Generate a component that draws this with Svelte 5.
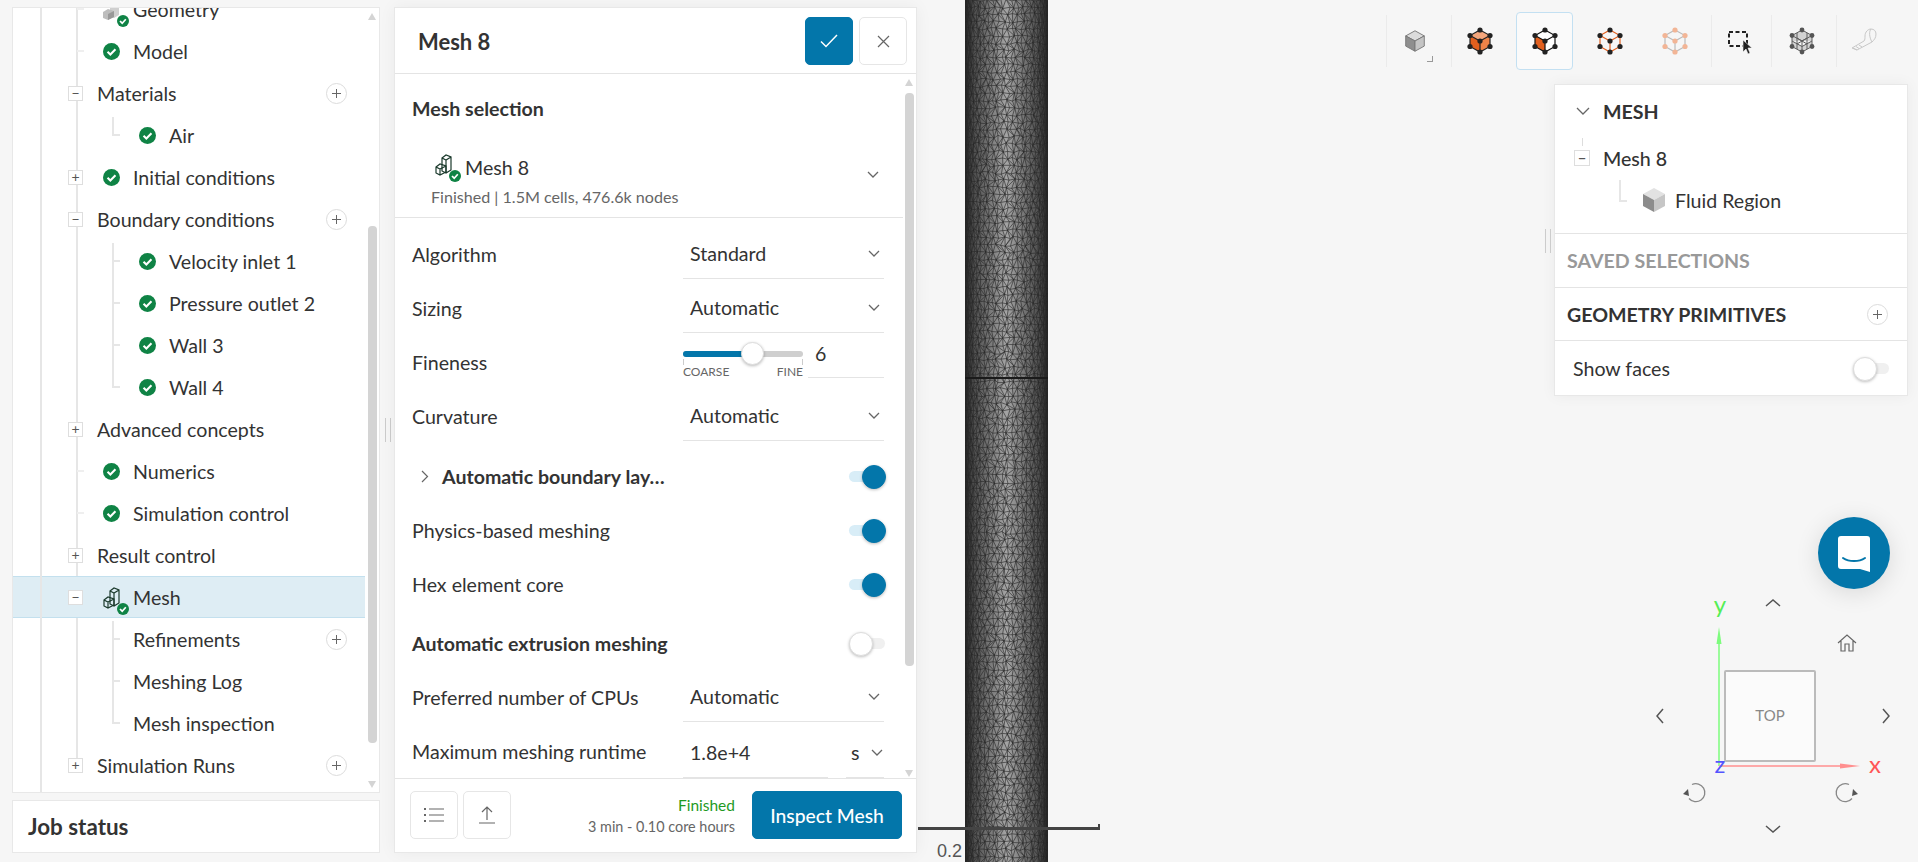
<script lang="ts">
  const treeRows = [
    { label: 'Geometry', level: 0, icon: 'geo' },
    { label: 'Model', level: 0, icon: 'check' },
    { label: 'Materials', level: 0, toggle: '-', add: true },
    { label: 'Air', level: 1, icon: 'check', first: true, last: true },
    { label: 'Initial conditions', level: 0, toggle: '+', icon: 'check' },
    { label: 'Boundary conditions', level: 0, toggle: '-', add: true },
    { label: 'Velocity inlet 1', level: 1, icon: 'check', first: true },
    { label: 'Pressure outlet 2', level: 1, icon: 'check' },
    { label: 'Wall 3', level: 1, icon: 'check' },
    { label: 'Wall 4', level: 1, icon: 'check', last: true },
    { label: 'Advanced concepts', level: 0, toggle: '+' },
    { label: 'Numerics', level: 0, icon: 'check' },
    { label: 'Simulation control', level: 0, icon: 'check' },
    { label: 'Result control', level: 0, toggle: '+' },
    { label: 'Mesh', level: 0, toggle: '-', icon: 'mesh', selected: true },
    { label: 'Refinements', level: 1, add: true, first: true },
    { label: 'Meshing Log', level: 1 },
    { label: 'Mesh inspection', level: 1, last: true },
    { label: 'Simulation Runs', level: 0, toggle: '+', add: true },
  ];

  // triangulated surface of the cylinder, squeezed towards the edges
  function buildMesh() {
    let seed = 4711;
    const rand = () => {
      seed = (seed * 16807) % 2147483647;
      return seed / 2147483647 - 0.5;
    };
    const cols = 26;
    const rows = 120;
    const R = 41;
    const pts: [number, number][][] = [];
    for (let j = 0; j <= rows; j++) {
      const line: [number, number][] = [];
      for (let i = 0; i <= cols; i++) {
        const t = (i / cols - 0.5) * Math.PI + (i % cols ? rand() * 0.07 : 0) + (j % 2 ? 0.06 : 0);
        const x = 41.5 + R * Math.sin(Math.max(-1.57, Math.min(1.57, t)));
        line.push([+x.toFixed(1), +(j * 7.2 + rand() * 3).toFixed(1)]);
      }
      pts.push(line);
    }
    let d = '';
    for (let j = 0; j < rows; j++) {
      for (let i = 0; i < cols; i++) {
        const a = pts[j][i];
        const b = pts[j][i + 1];
        const c = pts[j + 1][i];
        const e = pts[j + 1][i + 1];
        d += `M${a}L${b}M${a}L${c}`;
        d += (i + j) % 2 ? `M${a}L${e}` : `M${b}L${c}`;
      }
    }
    return d.replace(/,/g, ' ');
  }
  const meshPath = buildMesh();

  const hexDots = [[0, -11], [10, -5.5], [10, 5.5], [0, 11], [-10, 5.5], [-10, -5.5], [0, 0]];
</script>

{#snippet okIcon(size = 17)}
  <svg width={size} height={size} viewBox="0 0 18 18">
    <circle cx="9" cy="9" r="9" fill="#0f8345" />
    <path d="M4.8 9.2l3 3 5.4-5.6" fill="none" stroke="#fff" stroke-width="2.2" />
  </svg>
{/snippet}

{#snippet badge()}
  <circle cx="20" cy="30" r="6" fill="#0f8345" />
  <path d="M17 30l2.2 2.2 3.600-4" fill="none" stroke="#fff" stroke-width="1.700" />
{/snippet}

{#snippet meshIcon()}
  <svg class="mesh-icon" width="27" height="36" viewBox="0 0 27 36">
    <g fill="none" stroke="#1b3a2c" stroke-width="1.200">
      <path d="M7 12l4-3 5 2v13l-5 3-4-2zM7 12l4 2 5-3M11 14v13" />
      <path d="M1 21l4-3 6 2v6l-6 3-4-2zM1 21l4 2 6-3M5 23v6" />
    </g>
    {@render badge()}
  </svg>
{/snippet}

{#snippet geoIcon()}
  <svg class="mesh-icon" width="27" height="36" viewBox="0 0 27 36">
    <path d="M7 12l4-3 5 2v13l-5 3-4-2z" fill="#cfcfcf" />
    <path d="M0 21l5-3 6 2v6l-6 3-5-2z" fill="#bdbdbd" />
    <path d="M5 23l6-3v6l-6 3z" fill="#999" />
    {@render badge()}
  </svg>
{/snippet}

{#snippet addBtn()}
  <span class="add">
    <svg width="9" height="9" viewBox="0 0 9 9"><path d="M4.5 0v9M0 4.5h9" stroke="#666" stroke-width="1" /></svg>
  </span>
{/snippet}

{#snippet chevron()}
  <svg class="chev" width="12" height="8" viewBox="0 0 12 8"><path d="M1 1l5 5 5-5" fill="none" stroke="#666" stroke-width="1.3" /></svg>
{/snippet}

{#snippet toggle(on = true)}
  <span class="toggle" class:on><span class="knob"></span></span>
{/snippet}

{#snippet selectField(value, cls = '')}
  <div class="field {cls}"><span>{value}</span>{@render chevron()}</div>
{/snippet}

{#snippet cubeTool(top, left, right, edge, dot, dotR = 2.6)}
  <svg width="28" height="28" viewBox="-14 -14 28 28">
    <path d="M0-11L10-5.500 0 0-10-5.500z" fill={top} />
    <path d="M-10-5.500L0 0V11L-10 5.500z" fill={left} />
    <path d="M10-5.500L0 0V11L10 5.500z" fill={right} />
    <path d="M0-11L10-5.500V5.500L0 11-10 5.500V-5.500zM0 0V11M0 0L10-5.500M0 0L-10-5.500" fill="none" stroke={edge} stroke-width="1.2" />
    {#each hexDots as [cx, cy]}
      <circle {cx} {cy} r={dotR} fill={dot} />
    {/each}
  </svg>
{/snippet}

<div class="app">
  <!-- 3D viewport behind the panels -->
  <div class="viewport">
    <svg class="cylinder" width="83" height="862" viewBox="0 0 83 862">
      <defs>
        <linearGradient id="shade" x1="0" x2="1" y1="0" y2="0">
          <stop offset="0" stop-color="#2b2b2b" />
          <stop offset="0.12" stop-color="#505050" />
          <stop offset="0.5" stop-color="#a4a4a4" />
          <stop offset="0.88" stop-color="#505050" />
          <stop offset="1" stop-color="#2b2b2b" />
        </linearGradient>
      </defs>
      <rect width="83" height="862" fill="url(#shade)" />
      <path d={meshPath} fill="none" stroke="#262626" stroke-width="0.8" stroke-opacity="0.78" />
      <rect y="377" width="83" height="2" fill="#1a1a1a" />
    </svg>
    <div class="scale-line"></div>
    <div class="scale-tick"></div>
    <span class="scale-label">0.2</span>

    <div class="toolbar">
      <div class="tool sep view">
        <svg width="26" height="26" viewBox="-14 -14 28 28">
          <path d="M0-11L10-5.500 0 0-10-5.500z" fill="#dcdcdc" stroke="#777" />
          <path d="M-10-5.500L0 0V11L-10 5.500z" fill="#8e8e8e" stroke="#777" />
          <path d="M10-5.500L0 0V11L10 5.500z" fill="#c4c4c4" stroke="#777" />
        </svg>
        <span class="corner"></span>
      </div>
      <div class="tool sep">{@render cubeTool('#f4a67c', '#e2601f', '#ef8348', '#222', '#222')}</div>
      <div class="tool active">{@render cubeTool('#fff', '#e2601f', '#fff', '#111', '#222')}</div>
      <div class="tool">{@render cubeTool('none', 'none', 'none', '#e2601f', '#222')}</div>
      <div class="tool gap">{@render cubeTool('none', 'none', 'none', '#bbb', '#f2b596')}</div>
      <div class="tool sep narrow">
        <svg width="28" height="28" viewBox="0 0 28 28">
          <rect x="3" y="5" width="18" height="14" fill="none" stroke="#222" stroke-width="2" stroke-dasharray="4 2.500" />
          <path d="M17 13v12l3-3 2 5 2-1-2-5h4z" fill="#222" stroke="#f6f6f6" stroke-width="0.6" />
        </svg>
      </div>
      <div class="tool sep shift">
        <svg width="28" height="28" viewBox="-14 -14 28 28">
          <path d="M0-11L10-5.500V5.500L0 11-10 5.500V-5.500zM0 0V11M0 0L10-5.500M0 0L-10-5.500M-5-8V8M5-8V8M-10 0L0 5.500 10 0M-5-3L5 3M5-3L-5 3" fill="#bdbdbd" fill-opacity="0.6" stroke="#5c5c5c" stroke-width="1" />
          {#each hexDots.slice(0, 6) as [cx, cy]}
            <circle {cx} {cy} r="2.400" fill="#555" />
          {/each}
        </svg>
      </div>
      <div class="tool sep">
        <svg width="28" height="28" viewBox="0 0 28 28">
          <g fill="none" stroke="#c8c8c8" stroke-width="1">
            <path d="M14 9c0-4 3-7 6-7s5 2 5 5c0 4-2 6-4 8l-15 8-5-2 12-7c1-1 1-3 1-5z" />
            <path d="M20 2c-2 2-2 8 1 13M2 21l4 2M5 19.500l3 2M8 18l3 2" />
          </g>
        </svg>
      </div>
    </div>

    <div class="selection-panel">
      <section class="sel-tree">
        <div class="sel-head">
          <svg width="14" height="8" viewBox="0 0 14 8"><path d="M1 1l6 6 6-6" fill="none" stroke="#666" stroke-width="1.3" /></svg>
          <strong>MESH</strong>
        </div>
        <div class="sel-mesh">
          <span class="box small">−</span>
          <span>Mesh 8</span>
        </div>
        <div class="sel-region">
          <svg width="22" height="24" viewBox="-11 -12 22 24">
            <path d="M0-12L11-6 0 0-11-6z" fill="#e2e2e2" />
            <path d="M-11-6L0 0V12L-11 6z" fill="#8c8c8c" />
            <path d="M11-6L0 0V12L11 6z" fill="#c6c6c6" />
          </svg>
          <span>Fluid Region</span>
        </div>
      </section>
      <section class="sel-row muted-title"><strong>SAVED SELECTIONS</strong></section>
      <section class="sel-row"><strong>GEOMETRY PRIMITIVES</strong>{@render addBtn()}</section>
      <section class="sel-row faces"><span>Show faces</span>{@render toggle(false)}</section>
      <span class="grip panel-grip"></span>
    </div>

    <button class="chat" aria-label="Chat">
      <svg width="34" height="37" viewBox="0 0 34 37">
        <path d="M4 1h26a3 3 0 0 1 3 3v33l-10-3H4a3 3 0 0 1-3-3V4a3 3 0 0 1 3-3z" fill="#fff" />
        <path d="M6 23c6 4 16 4 22 0" fill="none" stroke="#0376aa" stroke-width="2" stroke-linecap="round" />
      </svg>
    </button>

    <!-- orientation gizmo -->
    <svg class="gizmo" width="260" height="260" viewBox="1650 590 260 260">
      <rect x="1725" y="671" width="90" height="90" rx="1" fill="#fbfbfb" stroke="#bbb" stroke-width="2" />
      <text x="1770" y="721" class="gz-top" text-anchor="middle">TOP</text>
      <path d="M1719 766V640" stroke="#7dfc7d" stroke-width="1.500" />
      <path d="M1719 627l-2.500 17h5z" fill="#7dfc7d" />
      <path d="M1719 766h132" stroke="#ff8f8f" stroke-width="1.500" />
      <path d="M1860 766l-20-2.500v5z" fill="#ff8f8f" />
      <text x="1720" y="613" class="gz-y">y</text>
      <text x="1875" y="773" class="gz-x">x</text>
      <text x="1720" y="773" class="gz-z">z</text>
      <g fill="none" stroke="#555" stroke-width="1.500">
        <path d="M1766 606l7-6 7 6M1766 826l7 6 7-6M1663 709l-6 7 6 7M1883 709l6 7-6 7" />
      </g>
      <g fill="none" stroke="#666" stroke-width="1.200">
        <path d="M1838 643l9-8 9 8M1841 641v10h4v-7h4v7h4v-10" />
      </g>
      <g fill="none" stroke="#888" stroke-width="1.300">
        <path d="M1692 784.500a9 9 0 1 1-3 14" />
        <path d="M1849 784.500a9 9 0 1 0 3 14" />
      </g>
      <path d="M1683 794l5-5 1 7zM1858 794l-5-5-1 7z" fill="#555" />
    </svg>
  </div>

  <div class="col-left">
    <div class="tree-panel">
      <div class="tree-rows">
        {#each treeRows as row (row.label)}
          <div
            class="row lvl{row.level}"
            class:selected={row.selected}
            class:first={row.first}
            class:last={row.last}
          >
            <span class="slot">
              {#if row.toggle}<span class="box">{row.toggle === '-' ? '−' : '+'}</span>{/if}
            </span>
            {#if row.icon}
              <span class="row-icon">
                {#if row.icon === 'check'}
                  {@render okIcon()}
                {:else if row.icon === 'mesh'}
                  {@render meshIcon()}
                {:else}
                  {@render geoIcon()}
                {/if}
              </span>
            {/if}
            <span class="row-label">{row.label}</span>
            {#if row.add}{@render addBtn()}{/if}
          </div>
        {/each}
      </div>
      <div class="sb-track tree-sb"><span class="sb-up"></span><span class="sb-thumb"></span><span class="sb-down"></span></div>
    </div>
    <div class="job-status">Job status</div>
  </div>

  <span class="grip left-grip"></span>

  <div class="dialog">
    <header class="dlg-head">
      <h2>Mesh 8</h2>
      <button class="btn primary icon-btn" aria-label="Save">
        <svg width="18" height="14" viewBox="0 0 18 14"><path d="M1 7.500l5 5L17 1" fill="none" stroke="#fff" stroke-width="1.500" /></svg>
      </button>
      <button class="btn icon-btn" aria-label="Close">
        <svg width="13" height="13" viewBox="0 0 13 13"><path d="M1 1l11 11M12 1L1 12" stroke="#666" stroke-width="1.200" /></svg>
      </button>
    </header>

    <div class="dlg-body">
      <div class="dlg-content">
        <h3 class="sec-title">Mesh selection</h3>
        <div class="mesh-pick">
          <div class="pick-text">
            <div class="pick-name">{@render meshIcon()}<span>Mesh 8</span></div>
            <div class="pick-sub">Finished | 1.5M cells, 476.6k nodes</div>
          </div>
          {@render chevron()}
        </div>

        <div class="form">
          <div class="form-row"><label>Algorithm</label>{@render selectField('Standard')}</div>
          <div class="form-row"><label>Sizing</label>{@render selectField('Automatic')}</div>
          <div class="form-row">
            <label>Fineness</label>
            <div class="fine">
              <div class="slider">
                <div class="rail"><span class="fill"></span><span class="thumb"></span></div>
                <div class="ticks"><span>COARSE</span><span>FINE</span></div>
              </div>
              <div class="fine-val">6</div>
            </div>
          </div>
          <div class="form-row"><label>Curvature</label>{@render selectField('Automatic')}</div>
          <div class="form-row toggle-row boundary">
            <div class="bold-label">
              <svg width="8" height="13" viewBox="0 0 8 13"><path d="M1 1l5.500 5.500L1 12" fill="none" stroke="#666" stroke-width="1.200" /></svg>
              <strong>Automatic boundary lay…</strong>
            </div>
            {@render toggle()}
          </div>
          <div class="form-row toggle-row"><label>Physics-based meshing</label>{@render toggle()}</div>
          <div class="form-row toggle-row"><label>Hex element core</label>{@render toggle()}</div>
          <div class="form-row toggle-row extrusion"><strong>Automatic extrusion meshing</strong>{@render toggle(false)}</div>
          <div class="form-row"><label>Preferred number of CPUs</label>{@render selectField('Automatic')}</div>
          <div class="form-row">
            <label>Maximum meshing runtime</label>
            <div class="runtime">
              <div class="field"><span>1.8e+4</span></div>
              <div class="field unit"><span>s</span>{@render chevron()}</div>
            </div>
          </div>
        </div>
      </div>
      <div class="sb-track dlg-sb"><span class="sb-up"></span><span class="sb-thumb"></span><span class="sb-down"></span></div>
    </div>

    <footer class="dlg-foot">
      <button class="btn icon-btn" aria-label="Log">
        <svg width="20" height="16" viewBox="0 0 20 16"><path d="M5 2h15M5 8h15M5 14h15" stroke="#666" stroke-width="1.200" /><path d="M0 1h2v2H0zM0 7h2v2H0zM0 13h2v2H0z" fill="#666" /></svg>
      </button>
      <button class="btn icon-btn" aria-label="Export">
        <svg width="16" height="18" viewBox="0 0 16 18"><path d="M8 14V1M3 6l5-5 5 5M0 17h16" fill="none" stroke="#666" stroke-width="1.200" /></svg>
      </button>
      <div class="status">
        <span class="finished">Finished</span>
        <span class="hours">3 min - 0.10 core hours</span>
      </div>
      <button class="btn primary inspect">Inspect Mesh</button>
    </footer>
  </div>
</div>

<style>
  :global(body) {
    margin: 0;
    background: #f6f6f6;
    font-family: Lato, "Open Sans", sans-serif;
    color: #333;
  }

  .app {
    position: relative;
    width: 1918px;
    height: 862px;
    overflow: hidden;
    display: flex;
    padding: 7px 0 9px 12px;
    box-sizing: border-box;
    font-size: 19.6px;
  }

  .viewport {
    position: absolute;
    inset: 0;
    background: #f6f6f6;
  }

  .cylinder {
    position: absolute;
    left: 965px;
    top: 0;
  }

  .scale-line {
    position: absolute;
    left: 918px;
    top: 827px;
    width: 182px;
    height: 3px;
    background: #444;
  }

  .scale-tick {
    position: absolute;
    left: 1098px;
    top: 824px;
    width: 2px;
    height: 4px;
    background: #444;
  }

  .scale-label {
    position: absolute;
    left: 937px;
    top: 841px;
    font: 18px "Liberation Sans", sans-serif;
    color: #555;
  }

  /* toolbar */
  .toolbar {
    position: absolute;
    left: 1386px;
    top: 12px;
    display: flex;
    height: 58px;
  }

  .tool {
    position: relative;
    width: 57px;
    height: 58px;
    margin-right: 8px;
    display: flex;
    align-items: center;
    justify-content: center;
    box-sizing: border-box;
  }

  .tool.sep::before {
    content: '';
    position: absolute;
    left: 0;
    top: 3px;
    bottom: 3px;
    width: 1px;
    background: #ebebeb;
  }

  .tool.active {
    border: 1px solid #c3e0f2;
    border-radius: 4px;
    background: #fafafa;
  }

  .tool.gap {
    margin-right: 8px;
  }

  .tool.narrow {
    margin-right: 3px;
  }

  .tool.shift svg {
    margin-left: 5px;
  }

  .corner {
    position: absolute;
    right: 10px;
    bottom: 8px;
    width: 5px;
    height: 5px;
    border-right: 1px solid #999;
    border-bottom: 1px solid #999;
  }

  /* selection panel */
  .selection-panel {
    position: absolute;
    left: 1554px;
    top: 84px;
    width: 354px;
    height: 312px;
    box-sizing: border-box;
    background: #fff;
    border: 1px solid #e8e8e8;
    box-shadow: 0 0 14px rgba(0, 0, 0, 0.05);
    display: flex;
    flex-direction: column;
  }

  .sel-tree {
    position: relative;
    height: 149px;
    border-bottom: 1px solid #e4e4e4;
  }

  .sel-head {
    position: absolute;
    left: 21px;
    top: 15px;
    display: flex;
    align-items: center;
    gap: 13px;
    height: 22px;
  }

  .sel-mesh {
    position: absolute;
    left: 19px;
    top: 61px;
    display: flex;
    align-items: center;
    gap: 13px;
    font-weight: 500;
    height: 24px;
  }

  .sel-mesh::before {
    content: '';
    position: absolute;
    left: 8px;
    top: -8px;
    height: 8px;
    border-left: 1px solid #ddd;
  }

  .sel-region {
    position: absolute;
    left: 88px;
    top: 103px;
    display: flex;
    align-items: center;
    gap: 10px;
  }

  .sel-region::before {
    content: '';
    position: absolute;
    left: -24px;
    top: -8px;
    width: 6px;
    height: 20px;
    border-left: 2px solid #e6e6e6;
    border-bottom: 2px solid #e6e6e6;
  }

  .sel-row {
    height: 54px;
    box-sizing: border-box;
    padding: 0 22px 0 12px;
    display: flex;
    align-items: center;
    justify-content: space-between;
    border-bottom: 1px solid #e4e4e4;
  }

  .sel-row:last-of-type {
    border-bottom: 0;
  }

  .sel-row .add {
    margin-right: -3px;
  }

  .muted-title {
    color: #999;
  }

  .faces {
    padding: 0 18px;
  }

  .grip {
    position: absolute;
    width: 4px;
    height: 24px;
    border-left: 1px solid #ccc;
    border-right: 1px solid #ccc;
  }

  .panel-grip {
    left: -10px;
    top: 144px;
  }

  .left-grip {
    left: 385px;
    top: 418px;
  }

  /* chat + gizmo */
  .chat {
    position: absolute;
    left: 1818px;
    top: 517px;
    width: 72px;
    height: 72px;
    padding: 0;
    border: 0;
    border-radius: 50%;
    background: #0376aa;
    box-shadow: 0 4px 24px rgba(0, 0, 0, 0.12);
    display: flex;
    align-items: center;
    justify-content: center;
  }

  .gizmo {
    position: absolute;
    left: 1650px;
    top: 590px;
  }

  .gz-top {
    font: 15px Lato, sans-serif;
    fill: #888;
  }

  .gz-y {
    font: 24px Lato, sans-serif;
    fill: #55ee55;
    text-anchor: middle;
  }

  .gz-x {
    font: 24px Lato, sans-serif;
    fill: #ff5555;
    text-anchor: middle;
  }

  .gz-z {
    font: 24px Lato, sans-serif;
    fill: #5555ff;
    text-anchor: middle;
  }

  /* left column */
  .col-left {
    position: relative;
    width: 368px;
    flex: none;
    display: flex;
    flex-direction: column;
    gap: 7px;
  }

  .tree-panel {
    position: relative;
    height: 786px;
    box-sizing: border-box;
    background: #fff;
    border: 1px solid #e8e8e8;
    overflow: hidden;
  }

  .tree-panel::before {
    content: '';
    position: absolute;
    left: 27px;
    top: 0;
    bottom: 0;
    width: 2px;
    background: #e6e6e6;
    z-index: 2;
  }

  .tree-rows {
    position: relative;
    width: 352px;
    margin-top: -20px;
  }

  .tree-rows::before {
    content: '';
    position: absolute;
    left: 63px;
    top: 0;
    bottom: 21px;
    width: 2px;
    background: #e6e6e6;
  }

  .row {
    position: relative;
    height: 42px;
    box-sizing: border-box;
    display: flex;
    align-items: center;
    padding-left: 55px;
    padding-right: 18px;
  }

  .row.lvl1 {
    padding-left: 91px;
  }

  .row.lvl1::before {
    content: '';
    position: absolute;
    left: 99px;
    top: 0;
    bottom: 0;
    width: 2px;
    background: #e6e6e6;
  }

  .row.lvl1.first::before {
    top: 3px;
  }

  .row.lvl1.last::before {
    bottom: 20px;
  }

  .row.lvl1::after {
    content: '';
    position: absolute;
    left: 100px;
    top: 20px;
    width: 7px;
    height: 2px;
    background: #e6e6e6;
  }

  .row.lvl0:not(:has(.box))::after {
    content: '';
    position: absolute;
    left: 64px;
    top: 20px;
    width: 7px;
    height: 2px;
    background: #efefef;
  }

  .row.selected {
    background: #deedf4;
    border-top: 1px solid #c3e0ee;
    border-bottom: 1px solid #c3e0ee;
  }

  .slot {
    position: relative;
    width: 15px;
    margin-right: 14px;
    flex: none;
    z-index: 1;
  }

  .box {
    display: flex;
    align-items: center;
    justify-content: center;
    width: 15px;
    height: 15px;
    box-sizing: border-box;
    background: #fff;
    border: 1px solid #dedede;
    color: #555;
    font-size: 14px;
    line-height: 1;
  }

  .box.small {
    width: 16px;
    height: 16px;
    font-weight: 700;
    z-index: 1;
  }

  .row-icon {
    width: 36px;
    flex: none;
    display: flex;
    align-items: center;
    padding-left: 6px;
    box-sizing: border-box;
  }

  .mesh-icon {
    flex: none;
    display: block;
  }

  .row-icon svg {
    display: block;
  }

  .row-label {
    flex: 1;
    white-space: nowrap;
  }

  .add {
    display: flex;
    align-items: center;
    justify-content: center;
    width: 21px;
    height: 21px;
    box-sizing: border-box;
    background: #fff;
    border: 1px solid #dcdcdc;
    border-radius: 50%;
    flex: none;
  }

  .job-status {
    height: 53px;
    box-sizing: border-box;
    background: #fff;
    border: 1px solid #e8e8e8;
    padding-left: 15px;
    display: flex;
    align-items: center;
    font-size: 22.4px;
    font-weight: 700;
  }

  /* scrollbars */
  .sb-track {
    position: absolute;
    width: 9px;
  }

  .sb-thumb {
    position: absolute;
    left: 0;
    width: 9px;
    background: #d4d4d4;
    border-radius: 4px;
  }

  .sb-up,
  .sb-down {
    position: absolute;
    left: 0;
    width: 0;
    height: 0;
    border-left: 4.500px solid transparent;
    border-right: 4.500px solid transparent;
  }

  .sb-up {
    top: 0;
    border-bottom: 7px solid #d4d4d4;
  }

  .sb-down {
    bottom: 0;
    border-top: 7px solid #d4d4d4;
  }

  .tree-sb {
    left: 355px;
    top: 5px;
    height: 775px;
  }

  .tree-sb .sb-thumb {
    top: 213px;
    height: 517px;
  }

  .dlg-sb {
    left: 510px;
    top: 5px;
    height: 698px;
  }

  .dlg-sb .sb-thumb {
    top: 14px;
    height: 573px;
  }

  /* dialog */
  .dialog {
    position: relative;
    width: 523px;
    margin-left: 14px;
    flex: none;
    box-sizing: border-box;
    background: #fff;
    border: 1px solid #e8e8e8;
    box-shadow: 0 0 16px rgba(0, 0, 0, 0.05);
    display: flex;
    flex-direction: column;
  }

  .dlg-head {
    height: 66px;
    flex: none;
    box-sizing: border-box;
    padding: 9px 9px 0 23px;
    display: flex;
    align-items: flex-start;
    gap: 6px;
    border-bottom: 1px solid #e4e4e4;
  }

  h2 {
    margin: 0 auto 0 0;
    font-size: 22px;
    font-weight: 700;
    line-height: 50px;
  }

  .btn {
    font-family: inherit;
    padding: 0;
    border: 1px solid #e6e6e6;
    border-radius: 5px;
    background: #fff;
    display: flex;
    align-items: center;
    justify-content: center;
  }

  .btn.primary {
    background: #0376aa;
    border-color: #0376aa;
    color: #fff;
  }

  .icon-btn {
    width: 48px;
    height: 48px;
    flex: none;
  }

  .dlg-body {
    position: relative;
    flex: 1;
    min-height: 0;
    overflow: hidden;
  }

  .dlg-content {
    width: 508px;
    box-sizing: border-box;
  }

  .sec-title {
    margin: 0;
    padding: 24px 0 0 17px;
    line-height: 22px;
    font-size: 19.6px;
    font-weight: 700;
  }

  .mesh-pick {
    height: 98px;
    box-sizing: border-box;
    padding: 34px 24px 0 36px;
    display: flex;
    align-items: flex-start;
    justify-content: space-between;
    border-bottom: 1px solid #e4e4e4;
  }

  .mesh-pick .chev {
    margin-top: 17px;
  }

  .pick-name {
    display: flex;
    align-items: center;
    gap: 3px;
    padding-left: 4px;
    height: 26px;
    margin-bottom: 7px;
  }

  .pick-name .mesh-icon {
    position: relative;
    top: -3px;
  }

  .pick-sub {
    font-size: 16.1px;
    color: #666;
    line-height: 20px;
  }

  .form {
    padding: 9px 0 0 17px;
  }

  .form-row {
    height: 54px;
    display: flex;
    align-items: center;
    justify-content: space-between;
    padding-right: 19px;
  }

  .form-row label {
    white-space: nowrap;
  }

  .toggle-row {
    padding-right: 18px;
  }

  .boundary {
    margin-top: 6px;
  }

  .extrusion {
    height: 64px;
    margin-bottom: -5px;
  }

  .bold-label {
    display: flex;
    align-items: center;
    gap: 13px;
    padding-left: 9px;
  }

  .field {
    position: relative;
    width: 201px;
    height: 46px;
    box-sizing: border-box;
    padding: 0 4px 0 7px;
    border-bottom: 1px solid #e4e4e4;
    display: flex;
    align-items: center;
    justify-content: space-between;
  }

  .form-row > .field {
    align-self: flex-end;
    height: 50px;
    margin-bottom: 2px;
  }

  .fine {
    width: 201px;
    display: flex;
    align-items: flex-start;
    height: 46px;
    margin-top: 5px;
  }

  .slider {
    width: 120px;
    flex: none;
    padding-top: 9px;
  }

  .rail {
    position: relative;
    height: 6px;
    border-radius: 3px;
    background: #cfcfcf;
  }

  .fill {
    position: absolute;
    left: 0;
    top: 0;
    bottom: 0;
    width: 60px;
    border-radius: 3px 0 0 3px;
    background: #0376aa;
  }

  .thumb {
    position: absolute;
    left: 58px;
    top: -9px;
    width: 23px;
    height: 23px;
    box-sizing: border-box;
    background: #fff;
    border: 1px solid #ddd;
    border-radius: 50%;
    box-shadow: 0 1px 3px rgba(0, 0, 0, 0.25);
  }

  .ticks {
    display: flex;
    justify-content: space-between;
    font-size: 12px;
    line-height: 14px;
    color: #666;
    margin-top: 8px;
    position: relative;
  }

  .ticks::before,
  .ticks::after {
    content: '';
    position: absolute;
    top: -6px;
    height: 6px;
    border-left: 1px solid #ccc;
  }

  .ticks::before {
    left: 0;
  }

  .ticks::after {
    right: 0;
  }

  .fine-val {
    flex: 1;
    margin-left: 5px;
    padding-left: 7px;
    height: 35px;
    line-height: 24px;
    border-bottom: 1px solid #e4e4e4;
  }

  .runtime {
    width: 201px;
    display: flex;
    justify-content: space-between;
    align-self: flex-end;
  }

  .runtime .field {
    width: 145px;
    height: 50px;
    padding-left: 7px;
  }

  .runtime .unit {
    width: 38px;
    padding: 0 1px 0 5px;
  }

  .toggle {
    position: relative;
    display: block;
    width: 36px;
    height: 11px;
    border-radius: 6px;
    background: #f0f0f0;
    flex: none;
  }

  .knob {
    position: absolute;
    left: 0;
    top: -6px;
    width: 24px;
    height: 24px;
    box-sizing: border-box;
    background: #fff;
    border: 1px solid #ddd;
    border-radius: 50%;
    box-shadow: 0 1px 3px rgba(0, 0, 0, 0.25);
  }

  .toggle.on {
    background: #d8edf7;
  }

  .toggle.on .knob {
    left: 13px;
    background: #0376aa;
    border-color: #0376aa;
  }

  .dlg-foot {
    position: relative;
    height: 74px;
    flex: none;
    box-sizing: border-box;
    padding: 12px 14px 0 15px;
    border-top: 1px solid #e4e4e4;
    display: flex;
    align-items: flex-start;
    gap: 5px;
  }

  .status {
    margin-left: auto;
    margin-right: 12px;
    display: flex;
    flex-direction: column;
    align-items: flex-end;
    line-height: 22px;
    padding-top: 3px;
  }

  .finished {
    color: #1f9a1f;
    font-size: 15.5px;
  }

  .hours {
    color: #666;
    font-size: 14.4px;
  }

  .inspect {
    width: 150px;
    height: 48px;
    font-size: 19.3px;
    font-weight: 500;
  }
</style>
